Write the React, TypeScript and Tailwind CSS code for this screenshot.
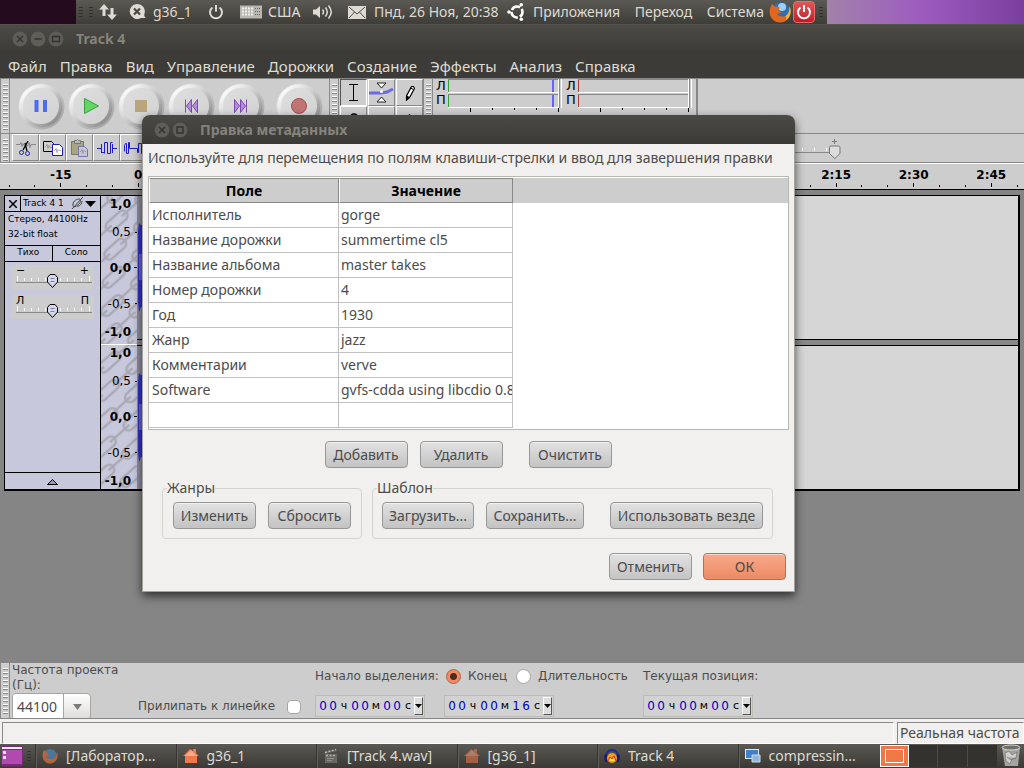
import { useState } from 'react';
import type { ReactNode } from 'react';

const menu = ['Файл', 'Правка', 'Вид', 'Управление', 'Дорожки', 'Создание', 'Эффекты', 'Анализ', 'Справка'];

const times = ['-15', '0', '15', '30', '45', '1:00', '1:15', '1:30', '1:45', '2:00', '2:15', '2:30', '2:45'];

const initialTags = [
  ['Исполнитель', 'gorge'],
  ['Название дорожки', 'summertime cl5'],
  ['Название альбома', 'master takes'],
  ['Номер дорожки', '4'],
  ['Год', '1930'],
  ['Жанр', 'jazz'],
  ['Комментарии', 'verve'],
  ['Software', 'gvfs-cdda using libcdio 0.8'],
  ['', ''],
];

function Grip() {
  return (
    <svg className="h-full w-[10px] shrink-0 border-l border-r border-[#8a8a8a] bg-[#cdcdcd]" aria-hidden="true">
      <defs>
        <pattern id="grip" width="10" height="4" patternUnits="userSpaceOnUse">
          <path d="M2 1.500h5" stroke="#fff" />
          <path d="M2 2.500h5" stroke="#888" />
        </pattern>
      </defs>
      <rect y="3" width="8" height="90%" fill="url(#grip)" />
    </svg>
  );
}

function PanelGrip() {
  return (
    <svg width="4" height="12" viewBox="0 0 4 12" className="shrink-0" aria-hidden="true">
      <path d="M0 1.500h4M0 4.500h4M0 7.500h4M0 10.500h4" stroke="#33322e" />
    </svg>
  );
}

function WindowButton({ label, children }: { label: string; children: ReactNode }) {
  return (
    <button type="button" aria-label={label} className="h-4 w-4 shrink-0">
      <svg width="16" height="16" viewBox="0 0 16 16" fill="none" stroke="#33322e" strokeWidth="1.400">
        <circle cx="8" cy="8" r="7.400" fill="#5f5d57" stroke="none" />
        {children}
      </svg>
    </button>
  );
}

function TopPanel() {
  return (
    <header className="flex h-6 bg-gradient-to-r from-[#a284a8] from-80% via-[#9d5bc0] via-90% to-[#7a3f9e]">
      <div className="w-[76px] shrink-0 bg-[#250b1e]" />
      <div className="flex w-[751px] shrink-0 items-center overflow-hidden bg-gradient-to-b from-[#5b5953] to-[#3e3d39] pl-[3px] whitespace-nowrap">
        <PanelGrip />
        <div className="w-[6px]" />
        <PanelGrip />
        <svg width="18" height="18" viewBox="0 0 18 18" className="ml-[6px]" fill="#dfdbd2">
          <path d="M5 1 0 6.500h3.500V13h3V6.500H10zM13 17l5-5.500h-3.500V5h-3v6.500H8z" />
        </svg>
        <svg width="18" height="18" viewBox="0 0 18 18" className="ml-3">
          <path d="M8 1a7.500 7.500 0 1 0 4 14h5c-1.500-1-2-2.500-1.600-4A7.500 7.500 0 0 0 8 1z" fill="#dfdbd2" />
          <path d="m5 5.500 6 6m0-6-6 6" stroke="#4a4944" strokeWidth="2.200" />
        </svg>
        <span className="ml-[6px] w-[55px]">g36_1</span>
        <svg width="16" height="16" viewBox="0 0 16 16" fill="none" stroke="#dfdbd2" strokeWidth="2">
          <path d="M4.500 3.500a6 6 0 1 0 7 0M8 1v6.500" />
        </svg>
        <svg width="22" height="14" viewBox="0 0 22 14" className="ml-4">
          <rect width="22" height="13" y=".5" fill="#b9b7b0" />
          <path d="M2 3.500h12M2 6.500h12M2 9.500h12" stroke="#eee" strokeWidth="2" strokeDasharray="2 1" />
          <path d="M15 3.500h6M15 6.500h6M15 9.500h6" stroke="#666" strokeDasharray="1 1" />
        </svg>
        <span className="ml-[6px] w-[45px]">США</span>
        <svg width="21" height="16" viewBox="0 0 21 16" fill="none" stroke="#dfdbd2" strokeWidth="1.500">
          <path d="M0 5.500h3L7 2v12L3 10.500H0z" fill="#dfdbd2" stroke="none" />
          <path d="M9.500 5.500q2 2.500 0 5M12.500 3.500q3.500 4.500 0 9M15.500 1.500q5.500 6.500 0 13" />
        </svg>
        <svg width="18" height="13" viewBox="0 0 18 13" className="ml-[14px]">
          <rect width="18" height="13" fill="#dfdbd2" />
          <path d="m1 1 8 7 8-7M1 12l5.500-6M17 12l-5.500-6" fill="none" stroke="#4a4944" />
        </svg>
        <time className="ml-2 w-[133px]">Пнд, 26 Ноя, 20:38</time>
        <svg width="18" height="18" viewBox="0 0 18 18" fill="none" stroke="#fff">
          <circle cx="10" cy="9" r="5.500" strokeWidth="2.600" strokeDasharray="9.500 2" strokeDashoffset="4" />
          <g fill="#fff" stroke="none">
            <circle cx="2" cy="9" r="1.800" />
            <circle cx="14.300" cy="1.800" r="1.800" />
            <circle cx="14.300" cy="16.200" r="1.800" />
          </g>
        </svg>
        <nav className="ml-2 flex w-[231px] shrink-0 justify-between">
          <a href="#apps">Приложения</a>
          <a href="#places">Переход</a>
          <a href="#system">Система</a>
        </nav>
        <svg width="22" height="22" viewBox="0 0 22 22" className="ml-[5px] shrink-0">
          <circle cx="11.500" cy="10" r="9" fill="#2e6fb4" />
          <circle cx="13" cy="6" r="4" fill="#9fd0ee" />
          <path d="M3 3C0 8 0 13 2.500 17c4 6 13 6 17 0 2.500-4 2.500-8 1-12 0 4-.5 8-4 10-4 1.500-8 0-9-3 2 1 4 .5 5-1-2 0-3-1-4-2.500l2.500-1.500c-1-1-3-1.500-5-1z" fill="#e4661c" />
          <path d="M20.500 5c0 4-.5 8-4 10 1.500 2 1 3 0 4.500 5-3 6.500-9 4-14.500z" fill="#f8b52d" />
        </svg>
        <button type="button" aria-label="Выключить" className="ml-[2px] flex h-[22px] w-[22px] shrink-0 items-center justify-center rounded-sm border border-[#e86a6a] bg-gradient-to-b from-[#e05757] to-[#c01828]">
          <svg width="16" height="16" viewBox="0 0 16 16" fill="none" stroke="#fff" strokeWidth="2">
            <path d="M4.500 3.500a6 6 0 1 0 7 0M8 1v7" />
          </svg>
        </button>
        <div className="w-1 shrink-0" />
        <PanelGrip />
      </div>
    </header>
  );
}

function RoundButton({ label, children }: { label: string; children: ReactNode }) {
  return (
    <button type="button" aria-label={label} className="h-[50px] w-[50px] shrink-0">
      <svg width="50" height="50" viewBox="0 0 50 50">
        <defs>
          <linearGradient id="rim" x1="0" y1="0" x2="1" y2="1">
            <stop offset=".15" stopColor="#fafafa" />
            <stop offset=".5" stopColor="#cbcbcb" />
            <stop offset=".9" stopColor="#868686" />
          </linearGradient>
          <linearGradient id="cap" x1="0" y1="0" x2="1" y2="1">
            <stop offset="0" stopColor="#dedede" />
            <stop offset="1" stopColor="#d2d2d2" />
          </linearGradient>
        </defs>
        <circle cx="25.500" cy="25.500" r="23" fill="url(#rim)" opacity=".6" />
        <circle cx="25" cy="25" r="21.500" fill="url(#rim)" />
        <circle cx="25" cy="25" r="18" fill="url(#cap)" />
        {children}
      </svg>
    </button>
  );
}

function ToolButton({ label, children }: { label: string; children?: ReactNode }) {
  return (
    <button
      type="button"
      aria-label={label}
      className="flex h-[27px] w-[27px] shrink-0 items-center justify-center border border-t-white border-r-[#888] border-b-[#888] border-l-white"
    >
      {children}
    </button>
  );
}

function Meter({ color, level }: { color: string; level?: boolean }) {
  return (
    <div className="flex w-[130px] shrink-0 font-['DejaVu_Sans',sans-serif] text-[13px] text-black">
      <div className="w-3 leading-[14px]">
        <div>Л</div>
        <div>П</div>
      </div>
      <svg width="114" height="34" viewBox="0 0 114 34" className="shrink-0">
        <path d="M0 .5h112M0 15.500h112" stroke="#888" />
        <path d="M0 13.500h112M0 28.500h112M110.500 0v29M113.500 0v29" stroke="#fff" />
        <path d="M111.500 0v29" stroke="#888" />
        <path d="M.5 1v12M.5 16v12" stroke={color} />
        {level && <path d="M105 1v12M105 16v12" stroke="#6464f5" strokeWidth="2" />}
        <path d="M22.500 29v4M44.500 29v2M66.500 29v2M88.500 29v2M110.500 29v4" stroke="#000" />
      </svg>
    </div>
  );
}

function Toolbars() {
  return (
    <div className="bg-[#cdcdcd]">
      <div className="flex h-[56px] border-t border-b border-[#888]">
        <Grip />
        <div className="flex w-[319px] shrink-0 items-start pt-[2px] pl-[6px]">
          <RoundButton label="Пауза">
            <path d="M18.500 19h4v12h-4zM27 19h4v12h-4z" fill="#4a6cf0" />
          </RoundButton>
          <RoundButton label="Воспроизвести">
            <path d="M18.500 17.500v15L32.500 25z" fill="#63d663" stroke="#3f9c42" />
          </RoundButton>
          <RoundButton label="Стоп">
            <path d="M19 19h12v12H19z" fill="#b9a67c" />
          </RoundButton>
          <RoundButton label="К началу">
            <path d="M19.500 18.500v13M25.500 18.500 20.500 25l5 6.500zM31.500 18.500l-5 6.500 5 6.500z" fill="#b48ade" stroke="#7d4bb0" />
          </RoundButton>
          <RoundButton label="К концу">
            <path d="M30.500 18.500v13M18.500 18.500l5 6.500-5 6.500zM24.500 18.500l5 6.500-5 6.500z" fill="#b48ade" stroke="#7d4bb0" />
          </RoundButton>
          <div className="w-2" />
          <RoundButton label="Запись">
            <circle cx="25" cy="25" r="7.500" fill="#c07474" stroke="#a05050" />
          </RoundButton>
        </div>
        <Grip />
        <div className="grid shrink-0 grid-cols-3 gap-x-px pl-px">
          <button type="button" aria-label="Выделение" className="flex h-[27px] w-[27px] items-center justify-center border border-t-[#555] border-r-white border-b-white border-l-[#555]">
            <svg width="9" height="17" viewBox="0 0 9 17" stroke="#000">
              <path d="M0 .5h9M0 16.500h9M4.500 0v17" />
            </svg>
          </button>
          <ToolButton label="Огибающая">
            <svg width="25" height="21" viewBox="0 0 25 21">
              <path d="M0 11h12l6-1 6-3" fill="none" stroke="#6a6ae6" strokeWidth="3" />
              <path d="M8 1h9l-4.500 5zM8 20h9l-4.500-5z" fill="#fff" stroke="#222" />
              <circle cx="12.500" cy="9.500" r="1.500" fill="#fff" />
            </svg>
          </ToolButton>
          <ToolButton label="Рисование">
            <svg width="10" height="16" viewBox="0 0 10 16">
              <path d="M6.500 1.500h2l1 2-5 9-3 2.500v-4z" fill="#fff" stroke="#000" strokeWidth="1.200" />
              <path d="m1.500 11 3 1.500L1.500 15zM5.500 3l3 1.500" stroke="#000" />
            </svg>
          </ToolButton>
          <ToolButton label="Масштаб">
            <svg width="14" height="14" viewBox="0 0 14 14" fill="none" stroke="#000" strokeWidth="1.500">
              <circle cx="7" cy="5" r="4" />
              <path d="m9 8 4 5" />
            </svg>
          </ToolButton>
          <ToolButton label="Перемещение" />
          <ToolButton label="Универсальный">
            <svg width="14" height="14" viewBox="0 0 14 14" stroke="#000" strokeWidth="1.500">
              <path d="M6.500 1v12M1 7h12M2.500 3l8 8M10.500 3l-8 8" />
            </svg>
          </ToolButton>
        </div>
        <Grip />
        <div className="flex border-r-2 border-[#888] pl-[3px]">
          <Meter color="#3a9a3a" level />
          <Meter color="#b03a3a" />
        </div>
      </div>
      <div className="flex h-7 items-stretch">
        <Grip />
        <div className="flex shrink-0 pl-[2px]">
          <ToolButton label="Вырезать">
            <svg width="20" height="18" viewBox="0 0 20 18" fill="none">
              <path d="M0 5.500h4l1-2 1 4 1-3 1 2h4l1-3 1 5 1-3h5" stroke="#777" strokeWidth=".8" />
              <path d="M12 2 7 11M9 4l2 8" stroke="#000" strokeWidth="1.300" />
              <circle cx="5.500" cy="13.500" r="2" stroke="#1e1eb4" />
              <circle cx="11.500" cy="14.500" r="2" stroke="#1e1eb4" />
            </svg>
          </ToolButton>
          <ToolButton label="Копировать">
            <svg width="20" height="16" viewBox="0 0 20 16">
              <path d="M.5 1.500h8l2 2v8H.5z" fill="#cfcfcf" stroke="#000" />
              <path d="M2 6.500h1l1-2 1 4 1-3 1 2h3" fill="none" stroke="#888" strokeWidth=".7" />
              <path d="M9.500 4.500h7l3 3v8h-10z" fill="#fff" stroke="#1e1eb4" />
              <path d="M11 10.500h1l1-2 1 4 1-3 1 1h2" fill="none" stroke="#888" strokeWidth=".7" />
            </svg>
          </ToolButton>
          <ToolButton label="Вставить">
            <svg width="18" height="18" viewBox="0 0 18 18">
              <path d="M.5 2.500h12v13H.5z" fill="#a9a583" stroke="#7c795e" />
              <path d="M3.500 4.500v-3h2l1-1 1 1h2v3z" fill="#b8b8b8" stroke="#777" />
              <path d="M7.500 7.500h6l3 3v7h-9z" fill="#c5c5d6" stroke="#7474b4" />
              <path d="M9 12.500h1l1-2 1 4 1-3 1 1h1" fill="none" stroke="#888" strokeWidth=".7" />
            </svg>
          </ToolButton>
          <ToolButton label="Обрезать">
            <svg width="20" height="14" viewBox="0 0 20 14" fill="none" stroke="#1e1ec8">
              <path d="M0 7.500h4.500V3M4.500 7.500V12M7.500 1.500v11M10.500 1.500v11M13.500 1.500v11M15.500 3v9M15.500 7.500H20" />
              <path d="M4.500 11.500h3M7.500 1.500h3M10.500 12.500h3M13.500 1.500h2" />
            </svg>
          </ToolButton>
          <ToolButton label="Тишина">
            <svg width="20" height="14" viewBox="0 0 20 14" fill="none" stroke="#1e1ec8">
              <path d="M.5 10.500v-6l1-2h1v10h2v-11h1v6h8v4h1v-9h3v10h2v-8" />
            </svg>
          </ToolButton>
        </div>
        <div className="w-[598px] shrink-0" />
        <svg width="96" height="26" viewBox="0 0 96 26" aria-hidden="true" className="shrink-0">
          <path d="M0 18.500h90" stroke="#888" />
          <path d="M45.500 14v3M57.500 14v3M69.500 14v3M81.500 14v3" stroke="#fff" />
          <path d="M87 7.500h5M89.500 5v5" stroke="#777" />
          <path d="M84.500 13.500q0-1.500 1.500-1.500h7.500q1.500 0 1.500 1.500v6l-5.250 5-5.250-5z" fill="#dcdcdc" stroke="#777" />
        </svg>
      </div>
    </div>
  );
}

function Ruler() {
  return (
    <div className="flex h-7 overflow-hidden border-t border-b border-t-[#888] border-b-black bg-[#cdcdcd] shadow-[inset_0_1px_0_#fff]">
      <div className="flex w-[22px] shrink-0 items-end pb-[2px] pl-[9px]">
        <div className="h-[2px] w-px bg-black" />
      </div>
      <div className="-mr-[6px] grid flex-1 grid-cols-13 font-['DejaVu_Sans',sans-serif] text-[12px] font-bold text-black">
        {times.map((t) => (
          <div key={t} className="flex flex-col justify-end pb-[2px] text-center leading-3">
            {t}
            <div className="flex h-[6px] items-end justify-around">
              <div className="h-[2px] w-px bg-black" />
              <div className="h-[4px] w-px bg-black" />
              <div className="h-[2px] w-px bg-black" />
            </div>
          </div>
        ))}
      </div>
    </div>
  );
}

function TrackSlider({ left, right, label }: { left: string; right: string; label: string }) {
  return (
    <div className="relative mx-[6px] h-[24px] bg-[#cdcdcd] px-[5px] text-[11px] text-black" aria-label={label}>
      <div className="flex justify-between leading-3">
        <span>{left}</span>
        <span>{right}</span>
      </div>
      <svg width="77" height="17" viewBox="0 0 77 17" className="absolute top-2 left-[5px]">
        <path d="M0 9.500h76" stroke="#888" />
        <path d="M1.500 3v5M8.500 5v3M15.500 5v3M22.500 5v3M29.500 5v3M44.500 5v3M51.500 5v3M58.500 5v3M65.500 5v3M73.500 3v5" stroke="#fff" />
        <path d="M31.500 4.500 34 1.500h5l2.500 3v4.500l-5 5.500-5-5.500z" fill="#d6d6ec" stroke="#000" />
        <path d="M34.500 5.500h4M34.500 8.500h4" stroke="#8080a8" />
      </svg>
    </div>
  );
}

function Scale() {
  return (
    <div className="flex flex-1 flex-col pr-[6px] text-right text-[12px] leading-4 text-black">
      <b>1,0</b>
      <span className="mt-3">0,5</span>
      <b className="mt-5">0,0</b>
      <span className="mt-5">-0,5</span>
      <b className="mt-3">-1,0</b>
    </div>
  );
}

function ScaleTicks() {
  return (
    <svg width="3" height="143" viewBox="0 0 3 143" className="absolute top-0 right-0" aria-hidden="true">
      <path d="M1 36.500h2M0 71.500h3M1 107.500h2" stroke="#000" />
    </svg>
  );
}

function Channel() {
  return (
    <svg width="100%" height="143" className="block bg-[#d6d6d6]" aria-hidden="true">
      <rect width="430" height="143" fill="#8f8fa3" />
      <path d="M1 60V35l1-8 2 2h420v82H4l-2 5-1-10z" fill="#3232c8" />
      <rect x="2" y="58" width="422" height="26" fill="#6464dc" />
    </svg>
  );
}

function Track() {
  return (
    <section className="mx-1 mt-[5px] flex h-[296px] border border-r-2 border-b-2 border-black bg-[#c8c8dc] font-['DejaVu_Sans',sans-serif]">
      <div className="flex w-[96px] shrink-0 flex-col border-r border-black text-[10px] text-black">
        <div className="flex h-4 border-b border-black">
          <button type="button" aria-label="Закрыть дорожку" className="flex w-4 items-center justify-center border-r border-black">
            <svg width="8" height="8" viewBox="0 0 8 8" stroke="#000" strokeWidth="1.500">
              <path d="m0 0 8 8M8 0 0 8" />
            </svg>
          </button>
          <button type="button" className="flex flex-1 items-center justify-between pr-1 pb-px pl-[2px] text-[9px]">
            Track 4 1
            <svg width="25" height="12" viewBox="0 0 25 12">
              <path d="M2 7c0-3 4-5 6-5s2 3 0 5-5 4-6 2zM1 12 12 0M6 9c2 1 5-2 5-5" fill="none" stroke="#444" />
              <path d="M14 4h11l-5.500 6z" />
            </svg>
          </button>
        </div>
        <div className="h-[34px] border-b border-black pl-[3px] text-[9px] leading-[15px]">
          Стерео, 44100Hz
          <br />
          32-bit float
        </div>
        <div className="grid h-4 grid-cols-2 border-b border-black text-[9px] leading-3">
          <button type="button" className="border-r border-black pb-[3px]">Тихо</button>
          <button type="button" className="pb-[3px]">Соло</button>
        </div>
        <div className="flex flex-1 flex-col gap-[6px] pt-[3px]">
          <TrackSlider left="−" right="+" label="Усиление" />
          <TrackSlider left="Л" right="П" label="Панорама" />
        </div>
        <button type="button" aria-label="Свернуть" className="flex h-[17px] items-center justify-center border-t border-black">
          <svg width="11" height="7" viewBox="0 0 11 7">
            <path d="M.5 6.500h10l-5-5z" fill="#9696b4" stroke="#000" />
          </svg>
        </button>
      </div>
      <div className="relative flex w-[36px] shrink-0 flex-col">
        <svg className="absolute inset-0 h-full w-full" aria-hidden="true">
          <defs>
            <pattern id="chain" width="40" height="40" patternUnits="userSpaceOnUse" patternTransform="rotate(-42)">
              <g fill="none" stroke="#a9a9b6" strokeWidth="2.500">
                <rect x="2" y="4" width="26" height="10" rx="5" />
                <path d="M22 9h20M-4 9H8" />
                <rect x="-18" y="24" width="26" height="10" rx="5" />
                <rect x="22" y="24" width="26" height="10" rx="5" />
                <path d="M2 29h26" />
              </g>
            </pattern>
          </defs>
          <rect width="100%" height="100%" fill="url(#chain)" />
        </svg>
        <div className="relative flex h-[151px] border-b border-white">
          <Scale />
          <ScaleTicks />
        </div>
        <div className="relative flex flex-1">
          <Scale />
          <ScaleTicks />
        </div>
      </div>
      <div className="min-w-0 flex-1">
        <Channel />
        <div className="h-[7px] border-t border-b border-black bg-[#888]" />
        <Channel />
      </div>
    </section>
  );
}

function Button({ className = '', primary, children }: { className?: string; primary?: boolean; children: ReactNode }) {
  const look = primary
    ? 'border-[#a8755f] from-[#f9a98c] to-[#ec8a63]'
    : 'border-[#979797] from-[#e2e2e2] to-[#c3c3c3]';
  return (
    <button type="button" className={`h-[27px] rounded border bg-gradient-to-b whitespace-nowrap shadow-[inset_0_1px_0_rgba(255,255,255,0.5)] ${look} ${className}`}>
      {children}
    </button>
  );
}

function MetadataDialog() {
  const [tags] = useState(initialTags);

  return (
    <div
      role="dialog"
      aria-labelledby="dialog-title"
      className="absolute top-[115px] left-[142px] w-[653px] rounded-t-lg border-r border-b border-l border-[#a3a29d] bg-[#f1f0ee] text-[#4c4c4c] shadow-[0_4px_10px_rgba(0,0,0,0.65)]"
    >
      <div className="-mx-px flex h-[29px] items-center gap-[2px] rounded-t-lg bg-gradient-to-b from-[#4b4a45] to-[#3b3a36] pl-3">
        <WindowButton label="Закрыть">
          <path d="m5 5 6 6m0-6-6 6" />
        </WindowButton>
        <WindowButton label="Развернуть">
          <path d="M5 5h6v6H5z" />
        </WindowButton>
        <h2 id="dialog-title" className="ml-[10px] font-bold text-[#85837c]">Правка метаданных</h2>
      </div>
      <p className="px-[5px] pt-1 leading-5 whitespace-nowrap">
        Используйте для перемещения по полям клавиши-стрелки и ввод для завершения правки
      </p>
      <div className="mx-[5px] mt-2 border border-[#b9b7b2] bg-white py-px">
        <div className="bg-[linear-gradient(#cdcdcd_25px,#fff_25px)]">
          <table className="w-[364px] table-fixed border-separate border-spacing-0">
            <thead>
              <tr className="h-[25px] text-black">
                <th className="w-[190px] border border-t-[#888] border-r-[#888] border-b-[#888] border-l-white p-0 leading-5">Поле</th>
                <th className="border border-t-[#888] border-r-[#888] border-b-[#888] border-l-white p-0 leading-5">Значение</th>
              </tr>
            </thead>
            <tbody>
              {tags.map(([name, value]) => (
                <tr key={name} className="h-[25px]">
                  <td className="border-r border-b border-[#c0c0c0] p-0 pl-[3px]">{name}</td>
                  <td className="overflow-hidden border-r border-b border-[#c0c0c0] p-0 pl-[2px] whitespace-nowrap">{value}</td>
                </tr>
              ))}
            </tbody>
          </table>
        </div>
      </div>
      <div className="mt-[11px] flex justify-center pr-px">
        <Button className="w-[83px]">Добавить</Button>
        <Button className="ml-3 w-[83px]">Удалить</Button>
        <Button className="ml-[26px] w-[83px]">Очистить</Button>
      </div>
      <div className="mt-[10px] flex gap-[10px] pl-[19px]">
        <fieldset className="flex gap-3 rounded border border-[#d5d3cf] px-[10px] pb-[9px]">
          <legend className="-ml-[6px] leading-5">Жанры</legend>
          <Button className="mt-1 w-[83px]">Изменить</Button>
          <Button className="mt-1 w-[83px]">Сбросить</Button>
        </fieldset>
        <fieldset className="flex rounded border border-[#d5d3cf] px-[9px] pb-[9px]">
          <legend className="-ml-[5px] leading-5">Шаблон</legend>
          <Button className="mt-1 w-[92px]">Загрузить...</Button>
          <Button className="mt-1 ml-3 w-[98px]">Сохранить...</Button>
          <Button className="mt-1 ml-[26px] w-[153px]">Использовать везде</Button>
        </fieldset>
      </div>
      <div className="mt-[14px] mb-[11px] flex justify-end gap-[11px] pr-2">
        <Button className="w-[83px]">Отменить</Button>
        <Button className="w-[83px]" primary>ОК</Button>
      </div>
    </div>
  );
}

function TimeField({ label, value }: { label: string; value: string }) {
  const units = ['ч', 'м', 'с'];
  return (
    <div role="group" aria-label={label} className="flex h-[22px] w-[110px] items-center border border-[#bdbbb6] bg-[#d2d2d2] pl-[2px] text-black">
      {units.map((unit, i) => (
        <div key={unit} className="flex">
          {[0, 1].map((d) => (
            <input
              key={d}
              aria-label={`${label}, ${unit} ${d + 1}`}
              maxLength={1}
              defaultValue={value[i * 2 + d]}
              className="w-[10px] text-center text-[#0000c8]"
            />
          ))}
          <span className="w-3 text-center text-[11px] leading-5">{unit}</span>
        </div>
      ))}
      <button type="button" aria-label="Формат времени" className="flex h-[18px] w-[9px] items-center justify-center border border-t-white border-r-[#555] border-b-[#555] border-l-white bg-[#dedede]">
        <svg width="7" height="4" viewBox="0 0 7 4">
          <path d="M0 0h7L3.500 4z" />
        </svg>
      </button>
    </div>
  );
}

function SelectionBar() {
  return (
    <div className="flex h-[56px] overflow-hidden border-b border-[#888] bg-[#cdcdcd] font-['DejaVu_Sans',sans-serif] text-[12px] whitespace-nowrap text-[#4c4c4c]">
      <Grip />
      <div className="w-[128px] shrink-0 pl-[2px] leading-[15px]">
        <label htmlFor="rate">
          Частота проекта
          <br />
          (Гц):
        </label>
        <div className="flex h-[27px] w-[79px] overflow-hidden rounded border border-[#a8a6a1] bg-gradient-to-b from-white to-[#dddcd9] font-['Noto_Sans',sans-serif] text-[14px]">
          <input id="rate" defaultValue="44100" className="w-[51px] border-r border-[#a8a6a1] bg-white pl-1" />
          <button type="button" aria-label="Выбрать частоту" className="flex flex-1 items-center justify-center">
            <svg width="9" height="6" viewBox="0 0 9 6">
              <path d="M0 0h9L4.500 6z" fill="#7a7a7a" />
            </svg>
          </button>
        </div>
      </div>
      <div className="flex w-[177px] shrink-0 items-end pb-1">
        <label htmlFor="snap" className="w-[149px] leading-4">Прилипать к линейке</label>
        <input id="snap" type="checkbox" className="h-[14px] w-[14px] appearance-none rounded-sm border border-[#a8a6a1] bg-white" />
      </div>
      <div className="flex w-[328px] shrink-0 flex-col justify-between pt-[3px] pb-px">
        <div className="flex items-center leading-5">
          <span className="w-[131px]">Начало выделения:</span>
          <input id="end" type="radio" name="mode" defaultChecked className="h-[15px] w-[15px] appearance-none rounded-full border border-[#a8654a] bg-[radial-gradient(circle,#4c2c1e_3px,#f58a60_4px)]" />
          <label htmlFor="end" className="w-[55px] pl-[7px]">Конец</label>
          <input id="length" type="radio" name="mode" className="h-[15px] w-[15px] appearance-none rounded-full border border-[#a8a6a1] bg-white" />
          <label htmlFor="length" className="pl-[7px]">Длительность</label>
        </div>
        <div className="flex gap-[19px]">
          <TimeField label="Начало выделения" value="000000" />
          <TimeField label="Конец" value="000016" />
        </div>
      </div>
      <div className="flex shrink-0 flex-col justify-between pt-[3px] pb-px">
        <span className="leading-5">Текущая позиция:</span>
        <TimeField label="Текущая позиция" value="000000" />
      </div>
    </div>
  );
}

function HouseIcon({ dim }: { dim?: boolean }) {
  return (
    <svg width="16" height="16" viewBox="0 0 16 16" opacity={dim ? 0.55 : 1}>
      <path d="M0 8 7 1l3 2V1h3v4l3 3h-2v7H2V8z" fill="#f0784a" />
      <path d="M2 8h12L8 2z" fill="#f8a98a" />
    </svg>
  );
}

function Task({ icon, children }: { icon: ReactNode; children: ReactNode }) {
  return (
    <button type="button" className="flex min-w-0 flex-1 items-center border-l border-[#35342f] pl-[6px] text-left whitespace-nowrap shadow-[inset_1px_0_0_#62605a]">
      <span className="w-6 shrink-0">{icon}</span>
      <span className="truncate">{children}</span>
    </button>
  );
}

function Taskbar() {
  return (
    <footer className="flex h-6 bg-gradient-to-b from-[#5b5953] to-[#3a3935]">
      <button type="button" aria-label="Свернуть все окна" className="w-6 shrink-0 pl-px">
        <svg width="22" height="22" viewBox="0 0 22 22">
          <rect width="22" height="21" y=".5" rx="2" fill="#7b2a78" />
          <rect x="1" y="5" width="20" height="14" fill="#b04ab0" />
          <path d="M1 2h20v2H1z" fill="#eee" />
          <path d="M2 6h3v3H2zM2 11h3v3H2z" fill="#f5e6f5" />
        </svg>
      </button>
      <div className="flex w-[11px] shrink-0 items-center pl-[3px]">
        <PanelGrip />
      </div>
      <div className="flex min-w-0 flex-1">
        <Task
          icon={
            <svg width="16" height="16" viewBox="0 0 16 16" opacity=".75">
              <circle cx="8" cy="8" r="7" fill="#4a86b8" />
              <path d="M2 2c-2 4-2 8 0 10.500 3 4 9 4 12 0 2-3 2-6 1-9 0 4-2 7-5 7.500S4 10 4 8l3-1C6 5 4 4 2 2z" fill="#d8703a" />
            </svg>
          }
        >
          [Лаборатор...
        </Task>
        <Task icon={<HouseIcon />}>g36_1</Task>
        <Task
          icon={
            <svg width="16" height="16" viewBox="0 0 16 16">
              <path d="M2 6h12v9H2zM1 4l12-3 1 2L2 6z" fill="#6a6862" />
              <path d="M3 7.500h10M2 4.500l11-3" stroke="#b5b3ad" strokeWidth="1.500" strokeDasharray="2 1.500" />
              <path d="M4 10.500h7M4 12.500h5" stroke="#8e8c86" />
            </svg>
          }
        >
          [Track 4.wav]
        </Task>
        <Task icon={<HouseIcon dim />}>[g36_1]</Task>
        <Task
          icon={
            <svg width="16" height="16" viewBox="0 0 16 16">
              <circle cx="8" cy="10" r="5" fill="#f59b1e" />
              <path d="m4 13 2-4 2 2 2-3 2 5" fill="#ffe03a" stroke="#e01e1e" />
              <path d="M2 9C2-.5 14-.5 14 9" fill="none" stroke="#1a2a9c" strokeWidth="2" />
              <path d="M0 7h3v7H1zM13 7h3l-1 7h-2z" fill="#1a1a78" />
            </svg>
          }
        >
          Track 4
        </Task>
        <Task
          icon={
            <svg width="16" height="16" viewBox="0 0 16 16">
              <path d="M0 1h14v10H0z" fill="#dfe9f5" />
              <path d="M1 2h12v8H1z" fill="#3f80c8" />
              <path d="M7 7h8v7H7z" fill="#8fb6e0" stroke="#d0d8e0" />
            </svg>
          }
        >
          compressin...
        </Task>
      </div>
      <div className="ml-[2px] flex shrink-0 py-px">
        <div className="flex w-[29px] items-center justify-center border border-white bg-[#f07746]">
          <div className="h-[14px] w-[19px] border border-white" />
        </div>
        <div className="w-[29px] border-r border-[#4c4b46] bg-[#33322f]" />
        <div className="w-[30px] border-r border-[#4c4b46] bg-[#33322f]" />
        <div className="w-[29px] bg-[#33322f]" />
      </div>
      <svg width="27" height="24" viewBox="0 0 27 24" className="shrink-0">
        <path d="M5 3h18l-2 19H8z" fill="#a3a3a0" />
        <ellipse cx="14" cy="3.500" rx="9" ry="2.500" fill="#6e6e6b" stroke="#d8d8d5" />
        <path d="m8 9 4-2 3 4 5-3-1 6-4 1-2 5-4-3zM10 13l4 3 5-2" fill="#d0d0cd" stroke="#777" strokeWidth=".8" />
      </svg>
    </footer>
  );
}

export default function App() {
  return (
    <div className="relative flex min-h-screen flex-col overflow-hidden bg-[#858585] font-['Noto_Sans',sans-serif] text-[14px] leading-5 text-[#dfdbd2]">
      <TopPanel />
      <div className="flex h-7 items-center gap-[2px] border-t border-[#55544e] bg-gradient-to-b from-[#4b4a45] to-[#3c3b37] pl-3">
        <WindowButton label="Закрыть">
          <path d="m5 5 6 6m0-6-6 6" />
        </WindowButton>
        <WindowButton label="Свернуть">
          <path d="M4.500 8h7" />
        </WindowButton>
        <WindowButton label="Развернуть">
          <path d="M4.500 5.500h7v5h-7z" />
        </WindowButton>
        <h1 className="ml-[10px] font-bold text-[#85837c]">Track 4</h1>
      </div>
      <nav className="flex h-[26px] items-center gap-[13px] bg-[#3c3b37] px-2 pt-px text-[15px]">
        {menu.map((item) => (
          <a key={item} href="#menu">{item}</a>
        ))}
      </nav>
      <Toolbars />
      <Ruler />
      <main className="flex-1">
        <Track />
      </main>
      <SelectionBar />
      <div className="flex h-[25px] gap-[3px] bg-[#f1f0ee] pt-[3px] pl-[2px] text-[#4c4c4c]">
        <div className="flex-1 border border-t-[#888] border-r-white border-b-white border-l-[#888]" />
        <div className="w-[127px] overflow-hidden border border-t-[#888] border-r-white border-b-white border-l-[#888] pl-[2px] whitespace-nowrap">
          Реальная частота
        </div>
      </div>
      <Taskbar />
      <MetadataDialog />
    </div>
  );
}
